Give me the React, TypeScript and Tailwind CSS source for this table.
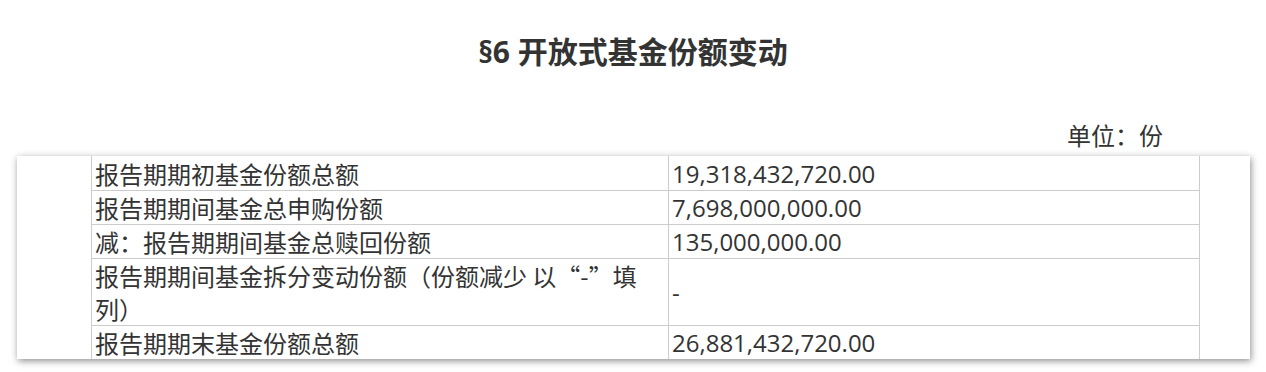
import React from 'react';

const rows = [
  { label: '报告期期初基金份额总额', value: '19,318,432,720.00' },
  { label: '报告期期间基金总申购份额', value: '7,698,000,000.00' },
  { label: '减：报告期期间基金总赎回份额', value: '135,000,000.00' },
  { label: '报告期期间基金拆分变动份额（份额减少 以“-”填列）', value: '-' },
  { label: '报告期期末基金份额总额', value: '26,881,432,720.00' },
];

export default function App() {
  return (
    <div
      className="w-[1266px] h-[372px] bg-white text-[#333] overflow-hidden"
      style={{ fontFamily: '"Open Sans", "Noto Sans CJK SC", sans-serif' }}
    >
      {/* Title */}
      <h1 className="pt-[32px] text-center text-[30px] leading-[40px] font-bold">
        §6 开放式基金份额变动
      </h1>

      {/* Unit */}
      <div className="mt-[47px] pr-[103px] text-right text-[24px] leading-[33px]">
        单位：份
      </div>

      {/* Table panel */}
      <div className="mt-[4px] ml-[17px] mr-[16px] h-[203px] bg-white shadow-[1px_2px_7px_rgba(0,0,0,0.45)] pl-[74px] pr-[50px]">
        <table className="w-full border-collapse text-[24px] leading-[33px]">
          <tbody>
            {rows.map((row, i) => (
              <tr key={i} className={i > 0 ? 'border-t border-[#cccccc]' : 'border-t border-transparent'}>
                <td
                  className="w-[577px] border-x border-[#cccccc] pl-[3px] pr-[8px] align-middle"
                  style={{ fontFamily: '"Noto Sans CJK SC", sans-serif' }}
                >
                  {row.label}
                </td>
                <td className="border-x border-[#cccccc] px-[3px] align-middle">
                  {row.value}
                </td>
              </tr>
            ))}
          </tbody>
        </table>
      </div>
    </div>
  );
}
